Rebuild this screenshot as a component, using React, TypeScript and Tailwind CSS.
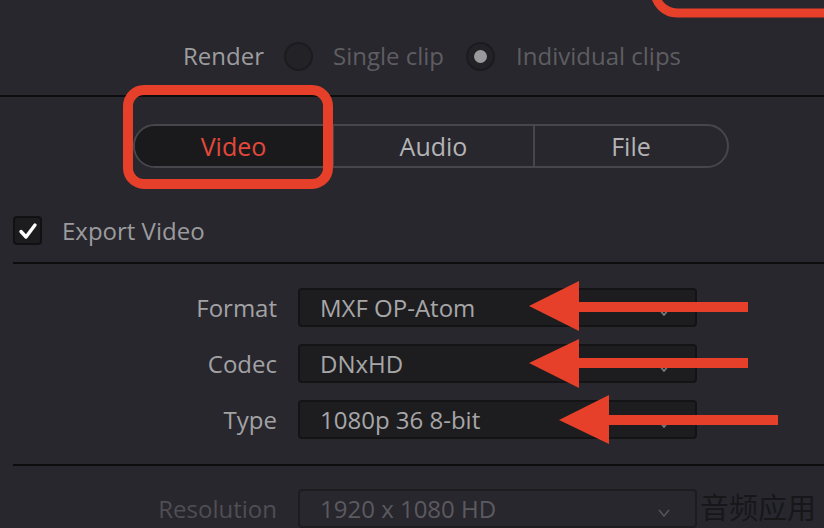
import React from "react";

const font = { fontFamily: "'Open Sans', 'Noto Sans CJK SC', sans-serif" };

const Radio = ({ checked }: { checked?: boolean }) => (
  <span className="flex h-[29px] w-[29px] items-center justify-center rounded-full border-2 border-[#1c1c1f] bg-[#232227]">
    {checked && <span className="h-[13px] w-[13px] rounded-full bg-[#9a9a9c]" />}
  </span>
);

const Chevron = ({ dim }: { dim?: boolean }) => (
  <svg width="14" height="10" viewBox="0 0 14 10" className="mt-2">
    <path
      d="M2 2 L7 8 L12 2"
      fill="none"
      stroke={dim ? "#55545a" : "#7d7c80"}
      strokeWidth="1.6"
    />
  </svg>
);

const Dropdown = ({ label, value, dim }: { label: string; value: string; dim?: boolean }) => (
  <div className="flex h-[39px] items-center gap-[21px]">
    <div
      className={`w-[277px] text-right text-[24px] leading-none ${dim ? "text-[#4f4e54]" : "text-[#a2a2a4]"}`}
    >
      {label}
    </div>
    <div
      className={`flex h-[39px] w-[399px] items-center justify-between rounded-[4px] border-2 pl-[20px] pr-[24px] ${
        dim ? "border-[#1d1d20] bg-[#28272d]" : "border-[#141416] bg-[#1d1d1f]"
      }`}
    >
      <span className={`text-[24px] leading-none ${dim ? "text-[#5b5a60]" : "text-[#a6a6a8]"}`}>{value}</span>
      <Chevron dim={dim} />
    </div>
  </div>
);

export default function App() {
  const red = "#e6402a";
  return (
    <div
      className="relative h-[528px] w-[824px] overflow-hidden bg-[#28272d]"
      style={font}
    >
      {/* render row */}
      <div className="flex h-[95px] items-start pl-[183px] pt-[41px]">
        <div className="flex h-[30px] items-center leading-none">
          <span className="text-[24px] text-[#9d9d9f]">Render</span>
          <span className="ml-[20px]">
            <Radio />
          </span>
          <span className="ml-[20px] text-[24px] text-[#5e5d62]">Single clip</span>
          <span className="ml-[22px]">
            <Radio checked />
          </span>
          <span className="ml-[21px] text-[24px] text-[#5e5d62]">Individual clips</span>
        </div>
      </div>
      <div className="h-[2px] bg-[#0d0d0e]" />

      {/* tabs */}
      <div className="ml-[133px] mt-[27px] flex h-[44px] w-[596px] overflow-hidden rounded-full border-2 border-[#47464c] leading-none">
        <div className="flex w-[197px] items-center justify-center bg-[#1a1a1c] text-[25px] text-[#e3483a]">
          Video
        </div>
        <div className="flex w-[201px] items-center justify-center border-l-2 border-[#47464c] text-[25px] text-[#b4b4b6]">
          Audio
        </div>
        <div className="flex flex-1 items-center justify-center border-l-2 border-[#47464c] text-[25px] text-[#b4b4b6]">
          File
        </div>
      </div>

      {/* export video */}
      <div className="ml-[13px] mt-[48px] flex h-[29px] items-center gap-[20px]">
        <span className="flex h-[29px] w-[29px] items-center justify-center rounded-[4px] border-2 border-[#111113] bg-[#1c1c1e]">
          <svg width="20" height="18" viewBox="0 0 20 18">
            <path d="M3 9.5 L8 15 L17 3" fill="none" stroke="#ffffff" strokeWidth="3.4" strokeLinecap="round" strokeLinejoin="round" />
          </svg>
        </span>
        <span className="text-[24px] leading-none text-[#9b9b9d]">Export Video</span>
      </div>
      <div className="ml-[13px] mt-[17px] h-[2px] bg-[#0d0d0e]" />

      {/* format rows */}
      <div className="mt-[24px] flex flex-col gap-[17px]">
        <Dropdown label="Format" value="MXF OP-Atom" />
        <Dropdown label="Codec" value="DNxHD" />
        <Dropdown label="Type" value="1080p 36 8-bit" />
      </div>
      <div className="ml-[13px] mt-[25px] h-[2px] bg-[#0d0d0e]" />

      <div className="mt-[23px]">
        <Dropdown label="Resolution" value="1920 x 1080 HD" dim />
      </div>

      {/* watermark */}
      <div className="absolute left-[700px] top-[490px] text-[29px] leading-[36px] text-[#17171a]">
        音频应用
      </div>

      {/* red annotations */}
      <svg className="pointer-events-none absolute left-0 top-0" width="824" height="528">
        <rect x="655" y="-70" width="320" height="83" rx="22" fill="none" stroke={red} strokeWidth="9" />
        <rect x="128" y="90" width="200" height="94" rx="16" fill="none" stroke={red} strokeWidth="10" />
        <polygon points="529,306 579,281 579,302 748,302 748,312 579,312 579,331" fill={red} />
        <polygon points="529,363 579,339 579,358 748,358 748,368 579,368 579,388" fill={red} />
        <polygon points="559,420 609,395 609,415 778,415 778,425 609,425 609,444" fill={red} />
      </svg>
    </div>
  );
}
